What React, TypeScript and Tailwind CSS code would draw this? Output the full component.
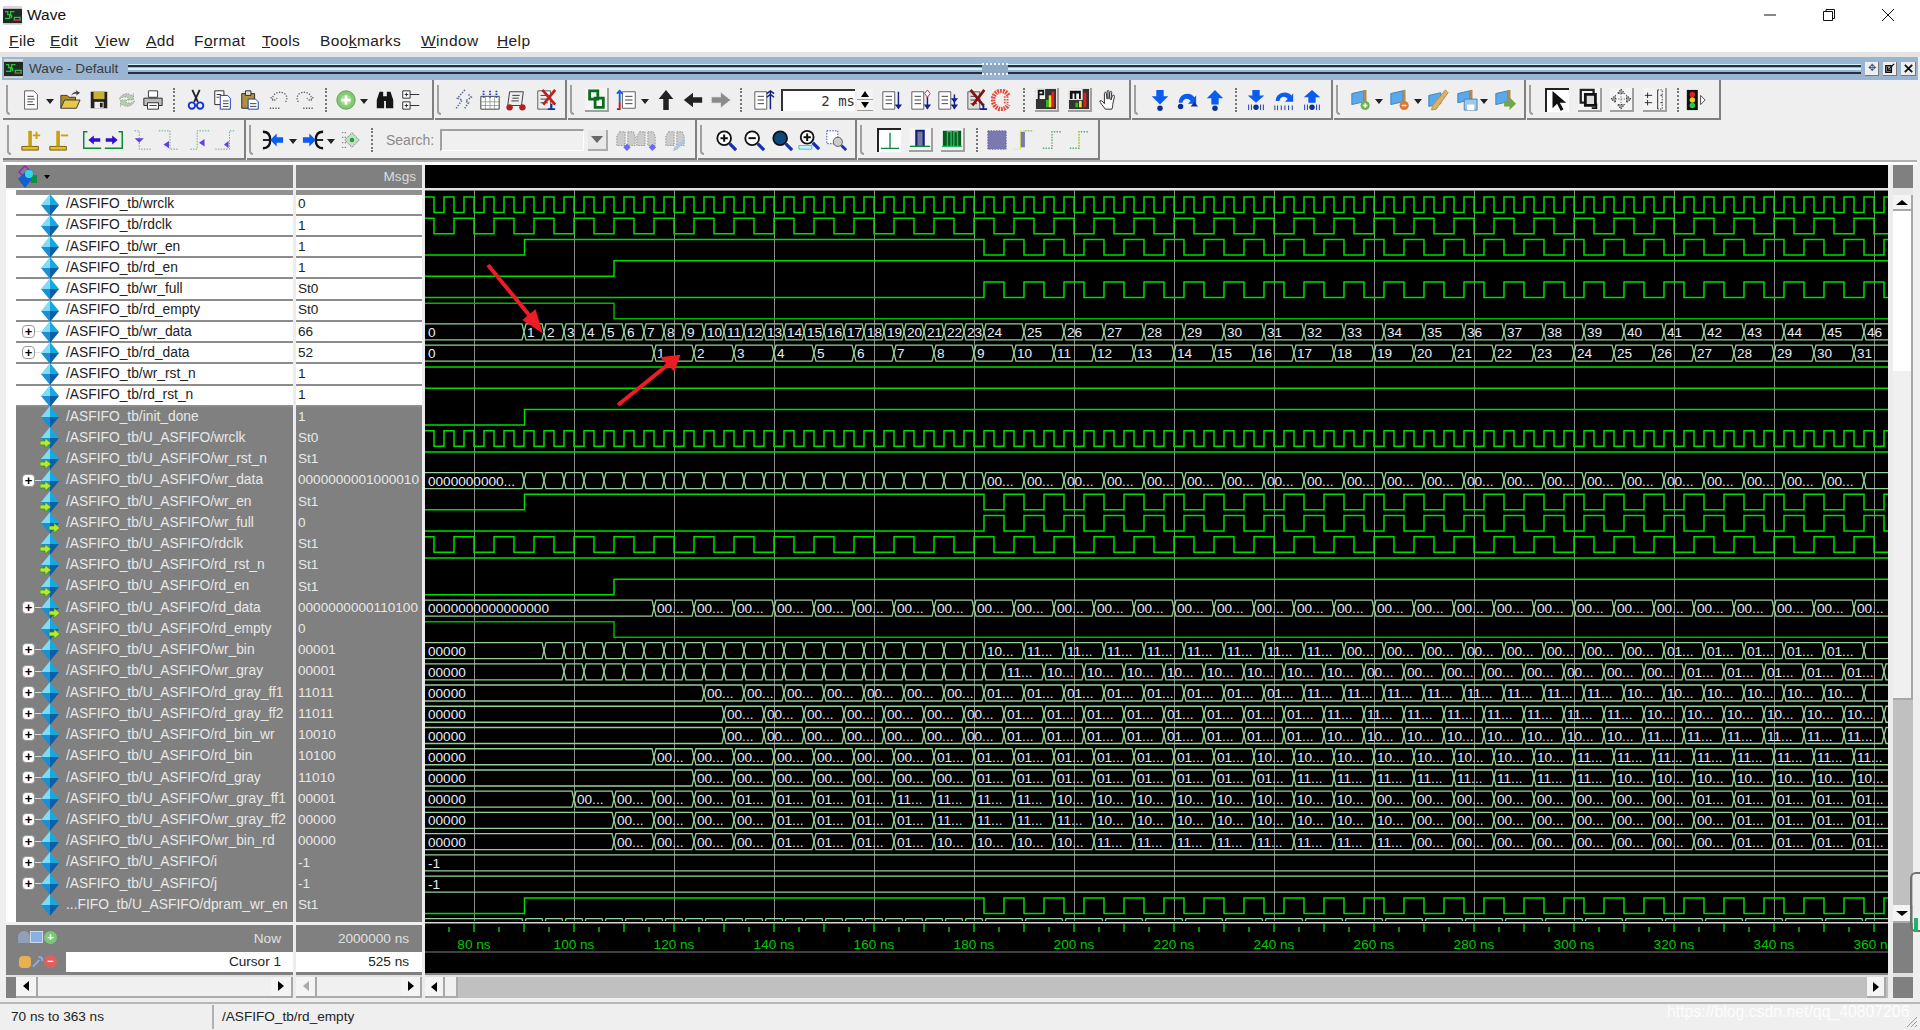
import React from 'react';

const ROW = 21.24;
const WAVE_END = 1900;

// x position of a time is 474 + (ns - 80) * 5
const gridXs = Array.from({ length: 15 }, (_, i) => 474 + i * 100);
const highY = (row: number) => 197 + ROW * row;

const toggles = (start: number, step: number, end = WAVE_END) => {
  const out: number[] = [];
  for (let x = start; x < end; x += step) out.push(x);
  return out;
};

type Seg = { x: number; label: string };
const runs = (start: number, step: number, list: [string, number][]) => {
  const out: Seg[] = [];
  let x = start;
  list.forEach(([label, count]) => {
    for (let i = 0; i < count; i++) {
      out.push({ x, label });
      x += step;
    }
  });
  return out;
};
const numbered = (start: number, step: number, from: number, to: number) => {
  const out: Seg[] = [];
  for (let n = from; n <= to; n++) out.push({ x: start + (n - from) * step, label: String(n) });
  return out;
};

const d = (v: string) => v + '...';
const wrEnEdges = [524.5, ...toggles(984, 20)];
const wrFullEdges = toggles(984, 20);
const rdEnEdges = [614];
const rdclkEdges = [434, ...toggles(454, 20)];

type Sig =
  | { kind: 'bit'; high: boolean; edges: number[]; color?: string }
  | { kind: 'bus'; segs: Seg[] };

const signals: Sig[] = [
  { kind: 'bit', high: true, edges: toggles(434, 10) },
  { kind: 'bit', high: true, edges: rdclkEdges },
  { kind: 'bit', high: false, edges: wrEnEdges },
  { kind: 'bit', high: false, edges: rdEnEdges },
  { kind: 'bit', high: false, edges: wrFullEdges },
  { kind: 'bit', high: true, edges: rdEnEdges, color: '#00b400' },
  { kind: 'bus', segs: [{ x: 425, label: '0' }, ...numbered(524, 20, 1, 23), ...numbered(984, 40, 24, 46)] },
  { kind: 'bus', segs: [{ x: 425, label: '0' }, ...numbered(654, 40, 1, 31)] },
  { kind: 'bit', high: true, edges: [] },
  { kind: 'bit', high: true, edges: [] },
  { kind: 'bit', high: false, edges: [524.5] },
  { kind: 'bit', high: true, edges: toggles(434, 10) },
  { kind: 'bit', high: true, edges: [] },
  { kind: 'bus', segs: [{ x: 425, label: '0000000000...' }, ...runs(524, 20, [['', 23]]), ...runs(984, 40, [[d('00'), 22], ['', 1]])] },
  { kind: 'bit', high: false, edges: wrEnEdges },
  { kind: 'bit', high: false, edges: wrFullEdges },
  { kind: 'bit', high: true, edges: rdclkEdges },
  { kind: 'bit', high: true, edges: [] },
  { kind: 'bit', high: false, edges: rdEnEdges },
  { kind: 'bus', segs: [{ x: 425, label: '0000000000000000' }, ...runs(654, 40, [[d('00'), 31]])] },
  { kind: 'bit', high: true, edges: rdEnEdges, color: '#00b400' },
  { kind: 'bus', segs: [{ x: 425, label: '00000' }, ...runs(544, 20, [['', 22]]), ...runs(984, 40, [[d('10'), 1], [d('11'), 8], [d('00'), 8], [d('01'), 5], ['', 1]])] },
  { kind: 'bus', segs: [{ x: 425, label: '00000' }, ...runs(564, 20, [['', 22]]), ...runs(1004, 40, [[d('11'), 1], [d('10'), 8], [d('00'), 8], [d('01'), 5], ['', 1]])] },
  { kind: 'bus', segs: [{ x: 425, label: '00000' }, ...runs(704, 40, [[d('00'), 7], [d('01'), 8], [d('11'), 8], [d('10'), 6], ['', 1]])] },
  { kind: 'bus', segs: [{ x: 425, label: '00000' }, ...runs(724, 40, [[d('00'), 7], [d('01'), 8], [d('11'), 8], [d('10'), 6], ['', 1]])] },
  { kind: 'bus', segs: [{ x: 425, label: '00000' }, ...runs(724, 40, [[d('00'), 7], [d('01'), 8], [d('10'), 8], [d('11'), 6], ['', 1]])] },
  { kind: 'bus', segs: [{ x: 425, label: '00000' }, ...runs(654, 40, [[d('00'), 7], [d('01'), 8], [d('10'), 8], [d('11'), 8]])] },
  { kind: 'bus', segs: [{ x: 425, label: '00000' }, ...runs(694, 40, [[d('00'), 7], [d('01'), 8], [d('11'), 8], [d('10'), 7]])] },
  { kind: 'bus', segs: [{ x: 425, label: '00000' }, ...runs(574, 40, [[d('00'), 4], [d('01'), 4], [d('11'), 4], [d('10'), 8], [d('00'), 8], [d('01'), 5]])] },
  { kind: 'bus', segs: [{ x: 425, label: '00000' }, ...runs(614, 40, [[d('00'), 4], [d('01'), 4], [d('11'), 4], [d('10'), 8], [d('00'), 8], [d('01'), 4], ['', 1]])] },
  { kind: 'bus', segs: [{ x: 425, label: '00000' }, ...runs(614, 40, [[d('00'), 4], [d('01'), 4], [d('10'), 4], [d('11'), 8], [d('00'), 8], [d('01'), 4], ['', 1]])] },
  { kind: 'bus', segs: [{ x: 425, label: '-1' }] },
  { kind: 'bus', segs: [{ x: 425, label: '-1' }] },
  { kind: 'bit', high: false, edges: wrEnEdges },
  { kind: 'bus', segs: [{ x: 425, label: '' }, ...runs(524, 20, [['', 23]]), ...runs(984, 40, [['', 23]])] },
];

const rows: [string, string, 'plain' | 'in' | 'out', boolean][] = [
  ['/ASFIFO_tb/wrclk', '0', 'plain', false],
  ['/ASFIFO_tb/rdclk', '1', 'plain', false],
  ['/ASFIFO_tb/wr_en', '1', 'plain', false],
  ['/ASFIFO_tb/rd_en', '1', 'plain', false],
  ['/ASFIFO_tb/wr_full', 'St0', 'plain', false],
  ['/ASFIFO_tb/rd_empty', 'St0', 'plain', false],
  ['/ASFIFO_tb/wr_data', '66', 'plain', true],
  ['/ASFIFO_tb/rd_data', '52', 'plain', true],
  ['/ASFIFO_tb/wr_rst_n', '1', 'plain', false],
  ['/ASFIFO_tb/rd_rst_n', '1', 'plain', false],
  ['/ASFIFO_tb/init_done', '1', 'plain', false],
  ['/ASFIFO_tb/U_ASFIFO/wrclk', 'St0', 'in', false],
  ['/ASFIFO_tb/U_ASFIFO/wr_rst_n', 'St1', 'in', false],
  ['/ASFIFO_tb/U_ASFIFO/wr_data', '0000000001000010', 'in', true],
  ['/ASFIFO_tb/U_ASFIFO/wr_en', 'St1', 'in', false],
  ['/ASFIFO_tb/U_ASFIFO/wr_full', '0', 'out', false],
  ['/ASFIFO_tb/U_ASFIFO/rdclk', 'St1', 'in', false],
  ['/ASFIFO_tb/U_ASFIFO/rd_rst_n', 'St1', 'in', false],
  ['/ASFIFO_tb/U_ASFIFO/rd_en', 'St1', 'in', false],
  ['/ASFIFO_tb/U_ASFIFO/rd_data', '0000000000110100', 'out', true],
  ['/ASFIFO_tb/U_ASFIFO/rd_empty', '0', 'out', false],
  ['/ASFIFO_tb/U_ASFIFO/wr_bin', '00001', 'plain', true],
  ['/ASFIFO_tb/U_ASFIFO/wr_gray', '00001', 'plain', true],
  ['/ASFIFO_tb/U_ASFIFO/rd_gray_ff1', '11011', 'plain', true],
  ['/ASFIFO_tb/U_ASFIFO/rd_gray_ff2', '11011', 'plain', true],
  ['/ASFIFO_tb/U_ASFIFO/rd_bin_wr', '10010', 'plain', true],
  ['/ASFIFO_tb/U_ASFIFO/rd_bin', '10100', 'plain', true],
  ['/ASFIFO_tb/U_ASFIFO/rd_gray', '11010', 'plain', true],
  ['/ASFIFO_tb/U_ASFIFO/wr_gray_ff1', '00001', 'plain', true],
  ['/ASFIFO_tb/U_ASFIFO/wr_gray_ff2', '00000', 'plain', true],
  ['/ASFIFO_tb/U_ASFIFO/wr_bin_rd', '00000', 'plain', true],
  ['/ASFIFO_tb/U_ASFIFO/i', '-1', 'plain', true],
  ['/ASFIFO_tb/U_ASFIFO/j', '-1', 'plain', true],
  ['...FIFO_tb/U_ASFIFO/dpram_wr_en', 'St1', 'plain', false],
];

const BLUE = '#0b5cf0';
const dotted = { strokeDasharray: '1.5 1.5' };

// toolbar glyphs, all drawn on a 24 unit box
const glyphs: Record<string, React.ReactNode> = {
  doc: (<><path d="M5 2h10l4 4v16H5z" fill="#fff" stroke="#555" /><path d="M8 8h7M8 11h8M8 14h6M8 17h8" stroke="#333" /></>),
  open: (<><path d="M2 21V7h7l2 2h7v3" fill="#b08a20" stroke="#333" /><path d="M2 21l4-9h17l-4 9z" fill="#e6c84c" stroke="#333" /><path d="M13 7c2-3 4-4 6-4l-1-2 5 3-4 3v-2c-2 0-4 1-6 2z" fill="#444" /></>),
  save: (<><path d="M3 3h18v18H3z" fill="#222" /><path d="M6 3h12v8H6z" fill="#c8b030" /><path d="M7 14h10v7H7z" fill="#eee" /><path d="M13 15h3v5h-3z" fill="#222" /></>),
  reload: (<path d="M4 11c1-5 8-8 13-4l2-2v7h-7l2-2c-3-2-7-2-10 1zM20 13c-1 5-8 8-13 4l-2 2v-7h7l-2 2c3 2 7 2 10-1z" fill="#b8ccb0" stroke="#8a9a88" {...dotted} />),
  print: (<><path d="M7 2h10v7H7z" fill="#fff" stroke="#333" /><path d="M2 10h20v8H2z" fill="#bbb" stroke="#222" /><path d="M6 15h12v7H6z" fill="#fff" stroke="#222" /><path d="M8 18h8" stroke="#333" /></>),
  cut: (<><path d="M8 1l6 13M16 1l-6 13" stroke="#222" strokeWidth="2" /><circle cx="7.5" cy="18" r="3.5" fill="none" stroke="#1030d0" strokeWidth="2" /><circle cx="16.5" cy="18" r="3.5" fill="none" stroke="#1030d0" strokeWidth="2" /></>),
  copy: (<><path d="M3 2h10v15H3z" fill="#fff" stroke="#222" /><path d="M9 7h8l3 3v12H9z" fill="#fff" stroke="#1030a0" /><path d="M5 6h5M5 9h3M12 13h6M12 16h6M12 19h6" stroke="#333" /></>),
  paste: (<><path d="M3 5h14v16H3z" fill="#b09040" stroke="#222" /><path d="M7 2h6v5H7z" fill="#ddd" stroke="#222" /><path d="M10 11h8l3 3v8H10z" fill="#fff" stroke="#1030a0" /><path d="M12 16h7M12 19h7" stroke="#333" /></>),
  undo: (<path d="M2 21h12M5 12c-1-6 6-11 13-7 4 3 3 8 0 10M3 9l3 4 4-3" fill="none" stroke="#666" strokeWidth="1.4" {...dotted} />),
  redo: (<path d="M10 21h12M19 12c1-6-6-11-13-7-4 3-3 8 0 10M21 9l-3 4-4-3" fill="none" stroke="#666" strokeWidth="1.4" {...dotted} />),
  add: (<><circle cx="12" cy="12" r="10" fill="#86c876" stroke="#5a9a55" /><circle cx="12" cy="12" r="6" fill="#a6dc96" /><path d="M12 7v10M7 12h10" stroke="#fff" strokeWidth="3" /></>),
  binoc: (<path d="M3 12l3-9h4v5h4V3h4l3 9v9h-8v-8h-2v8H3z" fill="#151515" />),
  tree: (<><path d="M3 2h8v8H3zM3 14h8v8H3z" fill="#fff" stroke="#222" /><path d="M5 6h4M7 4v4M5 18h4M7 16v4M11 6h10M11 18h10" stroke="#222" /></>),
  squig: (<path d="M14 1l-8 9 5 2-7 10M18 6l3 3-6 4 3 2-4 6" fill="none" stroke="#5a6a90" strokeWidth="1.8" {...dotted} />),
  cal: (<><path d="M2 8h20v14H2z" fill="#fff" stroke="#333" /><path d="M5 2v9M12 2v9M19 2v9" stroke="#2040c0" strokeWidth="2" {...dotted} /><path d="M2 14h20M2 18h20M7 8v14M12 8v14M17 8v14" stroke="#777" strokeWidth=".7" /></>),
  scroll: (<><path d="M5 3h15l-2 15H3z" fill="#eee" stroke="#333" /><path d="M8 7h8M8 10h7M7 13h8" stroke="#333" /><circle cx="5" cy="20" r="3.5" fill="#b02020" /><circle cx="19" cy="20" r="3.5" fill="#b02020" /></>),
  docx: (<><path d="M3 2h14v20H3z" fill="#eee" stroke="#555" /><path d="M6 7h9M6 11h7M6 15h8" stroke="#333" /><path d="M8 1l14 16M22 1L9 17" stroke="#c02020" strokeWidth="3" /><path d="M18 16v6M14 22h8" stroke="#1030a0" strokeWidth="2" /></>),
  chain: (<path d="M5 3h9v9H5zM11 11h9v10h-9z" fill="none" stroke="#0a6a20" strokeWidth="3" />),
  docud: (<><path d="M7 3h14v18H7z" fill="#fff" stroke="#555" /><path d="M10 8h8M10 12h8M10 16h8" stroke="#333" /><path d="M4 2v12M1 5l3-3 3 3" fill="none" stroke={BLUE} strokeWidth="2" /><path d="M4 14v8h-3" fill="none" stroke="#c01010" strokeWidth="2" /></>),
  up: (<path d="M12 1l8 10h-5v12H9V11H4z" fill="#222" />),
  left: (<path d="M2 12l10-8v5h10v6H12v5z" fill="#222" />),
  right: (<path d="M22 12l-10-8v5H2v6h10v5z" fill="#8a8a8a" stroke="#aaa" {...dotted} />),
  bars: (<><path d="M2 3h13v19H2z" fill="#fff" stroke="#555" /><path d="M5 8h7M5 12h7M5 16h7" stroke="#333" /><path d="M19 2v20M15 5l4-3 4 3M15 9l4-3 4 3" fill="none" stroke="#10208c" strokeWidth="1.6" /></>),
  bardn: (<><path d="M2 3h13v19H2z" fill="#fff" stroke="#555" /><path d="M5 8h7M5 12h7M5 16h7" stroke="#333" /><path d="M19 3v18" stroke="#10208c" strokeWidth="1.6" /><path d="M15 17h8l-4 5z" fill="#10208c" /></>),
  barud: (<><path d="M2 3h13v19H2z" fill="#fff" stroke="#555" /><path d="M5 8h7M5 12h7M5 16h7" stroke="#333" /><path d="M19 8v14" stroke="#10208c" strokeWidth="1.6" /><path d="M15 17h8l-4 5z" fill="#10208c" /><path d="M19 1l3 4-3 4-3-4z" fill="#fff" stroke="#d03030" /></>),
  bardd: (<><path d="M2 3h13v19H2z" fill="#fff" stroke="#555" /><path d="M5 8h7M5 12h7M5 16h7" stroke="#333" /><path d="M19 6v16" stroke="#10208c" strokeWidth="1.6" /><path d="M15 10h8l-4 5zM15 17h8l-4 5z" fill="#10208c" /></>),
  barx: (<><path d="M2 3h13v19H2z" fill="#ddd" stroke="#555" /><path d="M5 8h7M5 12h7M5 16h7" stroke="#333" /><path d="M5 1l14 17M20 1L7 18" stroke="#8a1010" strokeWidth="3" /><path d="M19 16v6M15 22h8" stroke="#10208c" strokeWidth="2" /></>),
  redc: (<><path d="M19 7A9 10 0 1 0 19 17" fill="none" stroke="#e05040" strokeWidth="5" {...{ strokeDasharray: '2 1' }} /><path d="M15 8v8M18 8v8" stroke="#e05040" strokeWidth="2" {...dotted} /></>),
  p: (<><path d="M1 1h22v22H1z" fill="#333" /><path d="M1 1h10v11H1z" fill="#f4f4f4" /><path d="M3 2h7v6H5v4H3zM5 4v2h3V4z" fill="#111" fillRule="evenodd" /><path d="M12 13h3v8h-3z" fill="#20c020" /><path d="M15 8h3v13h-3z" fill="#f0e020" /><path d="M18 4h3v17h-3z" fill="#e02020" /></>),
  m: (<><path d="M1 1h22v22H1z" fill="#333" /><path d="M1 1h15v12H1z" fill="#f4f4f4" /><path d="M2 3h12v3H2zM2 3h3v9H2zM7 3h2v9H7zM12 3h2v9h-2z" fill="#111" /><path d="M8 16h3v5H8z" fill="#20c020" /><path d="M12 14h3v7h-3z" fill="#f0e020" /><path d="M17 5h3v16h-3z" fill="#e02020" /></>),
  hand: (<path d="M8 22c-2-3-6-7-6-9 1-1 3 0 5 3V5c0-2 2-2 2 0l1 6V3c0-2 2-2 2 0v8l1-7c0-2 2-2 2 0l-1 8 2-5c1-1 2 0 2 1l-2 9c0 2 0 3-1 5z" fill="#fff" stroke="#222" />),
  stepin: (<><path d="M8 1h8v7h5l-9 9-9-9h5z" fill={BLUE} /><circle cx="12" cy="21" r="3" fill="#103090" /></>),
  stepov: (<><path d="M3 15C3 5 15 2 20 9l2-2v9h-9l3-3C13 9 8 10 7 15z" fill={BLUE} /><circle cx="5" cy="19" r="3" fill="#103090" /><path d="M20 14l-4 5h8z" fill="#103090" /></>),
  stepout: (<><path d="M12 1l9 9h-5v7H8v-7H3z" fill={BLUE} /><circle cx="12" cy="21" r="3" fill="#103090" /></>),
  runin: (<><path d="M8 1h8v6h5l-9 8-9-8h5z" fill={BLUE} /><path d="M4 17v6M7 17v6M17 17v6M20 17v6" stroke="#103090" /><circle cx="12" cy="20" r="3" fill="#103090" /></>),
  runov: (<><path d="M3 13C3 4 15 1 20 7l2-2v9h-9l3-3C13 7 8 8 7 13z" fill={BLUE} /><path d="M2 18v5M5 18v5M9 18v5M13 18v5M17 18v5M21 18v5" stroke="#103090" /></>),
  runout: (<><path d="M12 1l9 8h-5v6H8V9H3z" fill={BLUE} /><path d="M4 17v6M7 17v6M17 17v6M20 17v6" stroke="#103090" /><circle cx="12" cy="20" r="3" fill="#103090" /></>),
  flagp: (<><path d="M2 5l13-3v12L2 17z" fill="#5aaaea" stroke="#3a80c0" /><path d="M15 1h3v15h-3z" fill="#b08a50" /><circle cx="16.5" cy="18" r="5" fill="#70b050" /><path d="M16.5 15.5v5M14 18h5" stroke="#fff" strokeWidth="1.5" /></>),
  flagm: (<><path d="M2 5l13-3v12L2 17z" fill="#5aaaea" stroke="#3a80c0" /><path d="M15 1h3v15h-3z" fill="#b08a50" /><circle cx="16.5" cy="18" r="5" fill="#e07830" /><path d="M14 18h5" stroke="#fff" strokeWidth="1.5" /></>),
  flage: (<><path d="M2 7l13-3v12L2 19z" fill="#5aaaea" stroke="#3a80c0" /><path d="M20 1l3 3-13 18-5 1 1-5z" fill="#e0b060" stroke="#b08a50" /></>),
  flags: (<><path d="M2 5l13-3v10L2 15z" fill="#5aaaea" stroke="#3a80c0" /><path d="M15 1h3v12h-3z" fill="#b08a50" /><path d="M9 11h14v12H9z" fill="#9cc8ee" stroke="#4a80b0" /><path d="M12 17h8v6h-8z" fill="#fff" /></>),
  flagg: (<><path d="M2 5l13-3v12L2 17z" fill="#5aaaea" stroke="#3a80c0" /><path d="M15 1h3v12h-3z" fill="#b08a50" /><path d="M11 13h6v-4l7 7-7 7v-4h-6z" fill="#70a848" /></>),
  arrow: (<path d="M6 1v19l5-5 4 8 3-2-4-7h7z" fill="#111" />),
  zoomr: (<><path d="M3 2h14v14H3z" fill="none" stroke="#222" strokeWidth="2.5" /><path d="M8 7h11v12H8z" fill="#ddd" stroke="#111" strokeWidth="3" /><path d="M20 17v5h-5" fill="none" stroke="#111" strokeWidth="2" /></>),
  move: (<><path d="M12 1l4 5h-8zM12 23l4-5H8zM1 12l5-4v8zM23 12l-5-4v8z" fill="#999" stroke="#333" {...dotted} /><path d="M12 6v12M6 12h12" stroke="#777" {...dotted} /></>),
  split: (<><path d="M16 2h5v21h-5" fill="none" stroke="#333" {...dotted} /><path d="M2 8h8M2 16h8M16 2v21" stroke="#222" /><path d="M5 5v6M5 13v6M19 8h2M19 16h2" stroke="#222" /></>),
  light: (<><path d="M2 1h12v22H2z" fill="#111" /><circle cx="8" cy="6" r="3" fill="#e02020" /><circle cx="8" cy="12" r="3" fill="#e0d020" /><circle cx="8" cy="18" r="3" fill="#20d040" /><path d="M17 7l5 5-5 5z" fill="#fff" stroke="#444" /></>),
  ycursp: (<><path d="M2 19h18v4H2z" fill="#e8c020" stroke="#6a5a10" /><path d="M11 2v17" stroke="#c8a010" strokeWidth="4" /><path d="M14 7h8M18 3v8" stroke="#c8a010" strokeWidth="2" /></>),
  ycursm: (<><path d="M2 19h18v4H2z" fill="#e8c020" stroke="#6a5a10" /><path d="M11 2v17" stroke="#c8a010" strokeWidth="4" /><path d="M14 7h8" stroke="#c8a010" strokeWidth="2" /></>),
  brl: (<><path d="M7 3H3v18h19" fill="none" stroke="#0a8a30" strokeWidth="1.6" /><path d="M8 12l6-5v3h7v4h-7v3z" fill="#3010d0" /></>),
  brr: (<><path d="M17 3h4v18H2" fill="none" stroke="#0a8a30" strokeWidth="1.6" /><path d="M16 12l-6-5v3H3v4h7v3z" fill="#3010d0" /></>),
  dg1: (<><path d="M4 2h5v20h14" fill="none" stroke="#50a870" {...dotted} /><path d="M4 10l5 5 5-5z" fill="#6040e0" /></>),
  dg2: (<><path d="M1 2h12v20h10" fill="none" stroke="#50a870" {...dotted} /><path d="M6 17l6-4v8z" fill="#6040e0" /></>),
  dg3: (<><path d="M23 2H10v20H2" fill="none" stroke="#50a870" {...dotted} /><path d="M12 15l6-4v8z" fill="#6040e0" /></>),
  dg4: (<><path d="M23 2h-5v20H2" fill="none" stroke="#50a870" {...dotted} /><path d="M12 17l5 4V13z" fill="#6040e0" /></>),
  cmbl: (<><path d="M1 3c6 0 8 4 8 9s-2 9-8 9" fill="none" stroke="#111" strokeWidth="2.5" /><path d="M9 12l7-7v4h7v6h-7v4z" fill={BLUE} /><path d="M1 12h7" stroke="#111" strokeWidth="2" /></>),
  cmbr: (<><path d="M23 3c-6 0-8 4-8 9s2 9 8 9" fill="none" stroke="#111" strokeWidth="2.5" /><path d="M15 12L8 5v4H1v6h7v4z" fill={BLUE} /><path d="M16 12h7" stroke="#111" strokeWidth="2" /></>),
  cmbg: (<><path d="M12 4l8 8-8 8-8-8z" fill="#c0e0c0" stroke="#555" {...dotted} /><path d="M1 4h5M1 9h5M1 15h5M1 20h5" stroke="#666" {...dotted} /><circle cx="12" cy="12" r="2.5" fill="#20a040" /></>),
  srch1: (<><path d="M5 3h6v15H2V8zM14 3h6l2 5v10h-8z" fill="#ccc" stroke="#8a8a8a" {...dotted} /><path d="M9 20l4-4 4 4-4 4z" fill="#6a6af0" /></>),
  srch2: (<><path d="M5 3h6v15H2V8zM14 3h6l2 5v10h-8z" fill="#ccc" stroke="#8a8a8a" {...dotted} /><path d="M15 20l4-4 4 4-4 4z" fill="#6a6af0" /></>),
  srch3: (<><path d="M5 3h6v15H2V8zM14 3h6l2 5v10h-8z" fill="#ccc" stroke="#8a8a8a" {...dotted} /><path d="M21 12l2 2-9 9-4 1 1-4z" fill="#a8c8e8" /></>),
  zin: (<><circle cx="10" cy="10" r="7.5" fill="#fff" stroke="#111" strokeWidth="2" /><path d="M10 6v8M6 10h8" stroke="#111" strokeWidth="2.2" /><path d="M16 16l7 7" stroke="#1030b0" strokeWidth="3.5" /></>),
  zout: (<><circle cx="10" cy="10" r="7.5" fill="#fff" stroke="#111" strokeWidth="2" /><path d="M6 10h8" stroke="#111" strokeWidth="2.2" /><path d="M16 16l7 7" stroke="#1030b0" strokeWidth="3.5" /></>),
  zfull: (<><circle cx="10" cy="10" r="7.5" fill="#0a4a80" stroke="#111" strokeWidth="2" /><path d="M16 16l7 7" stroke="#1030b0" strokeWidth="3.5" /></>),
  zcur: (<><circle cx="10" cy="9" r="7" fill="#fff" stroke="#111" strokeWidth="2" /><path d="M10 5v8M6 9h8" stroke="#111" strokeWidth="2.2" /><path d="M1 18h14v4H1z" fill="#c8f0ff" stroke="#40c0e0" /><path d="M16 15l7 7" stroke="#1030b0" strokeWidth="3.5" /></>),
  zdash: (<><path d="M2 2h12v14H2z" fill="#fff" stroke="#2030b0" {...dotted} /><circle cx="14" cy="14" r="5" fill="#ccc" stroke="#555" /><path d="M18 18l5 5" stroke="#1030b0" strokeWidth="3" /></>),
  wv1: (<path d="M12 3v17M2 20h20" stroke="#0a8a40" strokeWidth="1.5" fill="none" />),
  wv2: (<><path d="M8 3h8v17H8z" fill="#7a7aa0" /><path d="M8 20V3h8v17" stroke="#102080" fill="none" strokeWidth="2.4" /><path d="M1 20h22" stroke="#0a8a40" fill="none" strokeWidth="1.5" /></>),
  wv3: (<><path d="M2 3h20v17H2z" fill="#0a5a20" /><path d="M7 20V4h4v16M14 20V4h4v16M1 20h22" stroke="#20c060" fill="none" strokeWidth="1.5" /></>),
  wv4: (<path d="M2 2h20v20H2z" fill="#7a7ab0" stroke="#5a5a90" {...dotted} />),
  wv5: (<><path d="M8 3h5v17H8z" fill="#7a7ab0" /><path d="M1 22h7V2h14M8 22V2" fill="none" stroke="#e0e040" {...dotted} /><path d="M13 2h9" stroke="#50a870" {...dotted} /></>),
  wv6: (<path d="M2 21h10V3h10" fill="none" stroke="#50a870" strokeWidth="1.4" {...dotted} />),
  wv7: (<><path d="M2 21h10V3h10" fill="none" stroke="#50a870" strokeWidth="1.4" {...dotted} /><path d="M12 3v18" stroke="#e0e040" strokeWidth="1.4" {...dotted} /></>),
};

const Glyph = ({ name }: { name: string }) => (
  <svg viewBox="0 0 24 24" className="w-[22px] h-[22px]">{glyphs[name]}</svg>
);

type Item = [string, number];
const W: Record<string, number> = { grip: 4, drop: 8, sep: 2, time: 74, spin: 16, searchlabel: 50, searchbox: 144, searchdrop: 20 };

const ToolItem = ({ name, left }: { name: string; left: number }) => {
  if (name === 'grip') return <div style={{ marginLeft: left }} className="w-[4px] h-[30px] border-l-2 border-b-2 border-[#a0a0a0] rounded-bl-sm" />;
  if (name === 'sep') return <div style={{ marginLeft: left }} className="w-[2px] h-[24px] border-l-2 border-dotted border-[#777]" />;
  if (name === 'drop') return <div style={{ marginLeft: left }} className="w-0 h-0 border-x-4 border-x-transparent border-t-[5px] border-t-[#222] mt-[2px]" />;
  if (name === 'time')
    return (
      <div style={{ marginLeft: left }} className="w-[74px] h-[22px] bg-white border-l-2 border-t-2 border-[#333] text-right text-[14px] leading-[20px] text-[#333] font-['DejaVu_Sans_Mono',monospace]">
        2 ms
      </div>
    );
  if (name === 'spin')
    return (
      <div style={{ marginLeft: left }} className="w-[16px] h-[22px] flex flex-col">
        <div className="h-[11px] flex items-center justify-center bg-[#f4f4f4] border-b border-[#999]"><div className="w-0 h-0 border-x-4 border-x-transparent border-b-[6px] border-b-black" /></div>
        <div className="h-[11px] flex items-center justify-center bg-[#f4f4f4] border-b border-[#999]"><div className="w-0 h-0 border-x-4 border-x-transparent border-t-[6px] border-t-black" /></div>
      </div>
    );
  if (name === 'searchlabel') return <div style={{ marginLeft: left }} className="w-[50px] text-[14px] text-[#8a8a8a]">Search:</div>;
  if (name === 'searchbox') return <div style={{ marginLeft: left }} className="w-[144px] h-[22px] bg-[#f0f0f0] border-l-2 border-t-2 border-[#a0a0a0] border-r border-b border-r-white border-b-white" />;
  if (name === 'searchdrop')
    return (
      <div style={{ marginLeft: left }} className="w-[20px] h-[21px] flex items-center justify-center bg-[#e8e8e8] border-r-2 border-b-2 border-[#aaa]">
        <div className="w-0 h-0 border-x-[6px] border-x-transparent border-t-[7px] border-t-[#666]" />
      </div>
    );
  const raised = name === 'chain' || name === 'p' || name === 'm' || name === 'wv2' || name === 'wv3' || name === 'zoomr' || name === 'move' || name === 'split';
  const pressed = name === 'arrow' || name === 'wv1';
  return (
    <div
      style={{ marginLeft: left }}
      className={`w-[24px] h-[24px] flex items-center justify-center ${raised ? 'bg-[#f4f4f4] border-r-2 border-b-2 border-[#a0a0a0]' : ''} ${pressed ? 'bg-white border-l-2 border-t-2 border-[#222]' : ''}`}
    >
      <Glyph name={name} />
    </div>
  );
};

const Section = ({ x0, widthClass, items }: { x0: number; widthClass: string; items: Item[] }) => {
  let cursor = x0;
  return (
    <div className={`${widthClass} h-[40px] pt-[2px] flex items-center shrink-0 border-r-2 border-b-2 border-[#808080]`}>
      {items.map(([name, cx], i) => {
        const w = W[name] ?? 24;
        const left = cx - w / 2 - cursor;
        cursor = cx + w / 2;
        return <ToolItem key={i} name={name} left={left} />;
      })}
    </div>
  );
};

const DiamondShape = ({ arrow }: { arrow: 'plain' | 'in' | 'out' }) => (
  <svg viewBox="0 0 20 22" className="w-[20px] h-[22px]">
    <path d="M10 0L10 11 1 11z" fill="#7fdcf8" />
    <path d="M10 0L19 11 10 11z" fill="#18a8e0" />
    <path d="M1 11L10 11 10 22z" fill="#1a90d4" />
    <path d="M19 11L10 11 10 22z" fill="#0b5fa8" />
    {arrow === 'in' && <path d="M0 14h5v-3l6 5-6 5v-3H0z" fill="#b8e830" stroke="#3a8a20" strokeWidth=".7" />}
    {arrow === 'out' && <path d="M9 14h5v-3l6 5-6 5v-3H9z" fill="#b8e830" stroke="#3a8a20" strokeWidth=".7" />}
  </svg>
);

const NameRow = ({ index }: { index: number }) => {
  const [name, , arrow, expand] = rows[index];
  const white = index < 10;
  return (
    <div className="h-[21.24px] flex shrink-0">
      <div className="w-[10px] bg-white" />
      <div className={`relative flex-1 flex items-center border-b-2 box-border ${white ? 'bg-white border-[#8c8c8c] text-[#222]' : 'bg-[#808080] border-[#808080] text-[#e8e8e8]'}`}>
        {expand && (
          <>
            <div className="absolute left-[6px] top-[3px] w-[13px] h-[13px] flex items-center justify-center bg-white border border-[#999] rounded-sm text-[13px] leading-none text-black font-bold">+</div>
            <div className="absolute left-[19px] top-[9px] w-[6px] h-[1px] bg-[#ddd]" />
          </>
        )}
        <div className="absolute left-[24px] -top-[1px]">
          <DiamondShape arrow={arrow} />
        </div>
        <span className="ml-[50px] whitespace-nowrap text-[13.8px]">{name}</span>
      </div>
    </div>
  );
};

const ValueRow = ({ index }: { index: number }) => {
  const white = index < 10;
  return (
    <div className={`h-[21.24px] shrink-0 flex items-center pl-[2px] border-b-2 box-border whitespace-nowrap ${white ? 'bg-white border-[#8c8c8c] text-[#222]' : 'bg-[#808080] border-[#808080] text-[#e8e8e8]'}`}>
      {rows[index][1]}
    </div>
  );
};

const bitPath = (row: number, high: boolean, edges: number[]) => {
  const hi = highY(row);
  const lo = hi + 15.5;
  let level = high;
  let p = `M425 ${level ? hi : lo}`;
  edges.forEach((x) => {
    p += `H${x}V${level ? lo : hi}`;
    level = !level;
  });
  return p + `H${WAVE_END}`;
};

const busSegPath = (row: number, x0: number, x1: number, first: boolean) => {
  const top = highY(row) - 0.5;
  const bot = top + 16;
  const mid = (top + bot) / 2;
  const a = first ? x0 : x0 + 2;
  const start = first ? `M${x0} ${top}` : `M${x0} ${mid}L${a} ${top}`;
  const body = `${start}H${x1 - 2}L${x1} ${mid}L${x1 - 2} ${bot}H${a}`;
  return first ? body : `${body}L${x0} ${mid}`;
};

const WaveChart = () => (
  <svg viewBox="425 165 1463 808" className="w-[1463px] h-[808px] block bg-black font-['Liberation_Sans',sans-serif]">
    <rect x="425" y="188" width="1463" height="2.5" fill="#e0e0e0" />
    {gridXs.map((x) => (
      <line key={x} x1={x + 0.5} x2={x + 0.5} y1={190} y2={923} stroke="#8c8c8c" strokeWidth="1" />
    ))}
    {signals.map((s, i) => {
      if (s.kind === 'bit') {
        return <path key={i} d={bitPath(i, s.high, s.edges)} fill="none" stroke={s.color ?? '#00dc00'} strokeWidth="1.5" />;
      }
      return (
        <g key={i}>
          {s.segs.map((seg, j) => {
            const next = s.segs[j + 1] ? s.segs[j + 1].x : WAVE_END;
            return (
              <g key={j}>
                <path d={busSegPath(i, seg.x, next, j === 0)} fill="none" stroke="#96d096" strokeWidth="1.3" />
                {seg.label && (
                  <text x={seg.x + 3} y={highY(i) + 12.5} fontSize="13.6" fill="#e4ecfa">
                    {seg.label}
                  </text>
                )}
              </g>
            );
          })}
        </g>
      );
    })}
    {/* the next signal is cut off by the cursor pane */}
    <rect x="425" y="921" width="1463" height="52" fill="#000" />
    <rect x="425" y="922" width="1463" height="1.5" fill="#d8d8d8" />
    {toggles(449, 25, 1888).map((x, i) => (
      <line key={x} x1={x} x2={x} y1={i % 2 === 0 ? 927 : 924} y2={932} stroke="#00c800" strokeWidth="1.5" />
    ))}
    {gridXs.map((x, i) => (
      <text key={x} x={x} y={949} fontSize="13.6" fill="#00c800" textAnchor="middle">
        {80 + i * 20} ns
      </text>
    ))}
    <line x1="425" x2="1888" y1="952" y2="952" stroke="#555" strokeWidth="1.5" />
    {/* red annotation arrows */}
    <path d="M488 265L534 321" stroke="#ee1c25" strokeWidth="4" fill="none" />
    <path d="M541 331L524 320 535 311z" fill="#ee1c25" stroke="#ee1c25" strokeWidth="2" />
    <path d="M618 405L670 363" stroke="#ee1c25" strokeWidth="4" fill="none" />
    <path d="M679 356L674 370 662 358z" fill="#ee1c25" stroke="#ee1c25" strokeWidth="2" />
  </svg>
);

const triClass = {
  left: 'border-y-[5px] border-y-transparent border-r-[6px] border-r-black',
  right: 'border-y-[5px] border-y-transparent border-l-[6px] border-l-black',
  up: 'border-x-[6px] border-x-transparent border-b-[5px] border-b-black',
  down: 'border-x-[6px] border-x-transparent border-t-[5px] border-t-black',
  leftMuted: 'border-y-[5px] border-y-transparent border-r-[6px] border-r-[#aaa]',
};

const ArrowBtn = ({ dir, className }: { dir: keyof typeof triClass; className: string }) => (
  <div className={`${className} flex items-center justify-center bg-[#f4f4f4] border-r-2 border-b-2 border-[#a8a8a8] shrink-0`}>
    <div className={`w-0 h-0 ${triClass[dir]}`} />
  </div>
);

const menu: [React.ReactNode, string][] = [
  [<><u>F</u>ile</>, 'w-[41px]'],
  [<><u>E</u>dit</>, 'w-[45px]'],
  [<><u>V</u>iew</>, 'w-[51px]'],
  [<><u>A</u>dd</>, 'w-[48px]'],
  [<>F<u>o</u>rmat</>, 'w-[68px]'],
  [<><u>T</u>ools</>, 'w-[58px]'],
  [<>Boo<u>k</u>marks</>, 'w-[101px]'],
  [<><u>W</u>indow</>, 'w-[76px]'],
  [<><u>H</u>elp</>, 'w-[50px]'],
];

const WinIcon = () => (
  <svg viewBox="0 0 20 20" className="w-[19px] h-[19px]">
    <rect width="20" height="20" fill="#d8d8d8" />
    <rect y="3" width="20" height="15" fill="#1c2c24" />
    <path d="M2 6h3v3h3V6h4M2 13h5v-3h2v3M12 12h6v3h-6z" stroke="#30c040" fill="none" strokeWidth="1.4" />
    <path d="M11 15h7" stroke="#d02050" strokeWidth="1.5" />
  </svg>
);

export default function App() {
  return (
    <div className="relative w-[1920px] h-[1030px] overflow-hidden bg-[#efefef] font-['Liberation_Sans',sans-serif] text-[13.6px] leading-none">
      {/* window title */}
      <div className="h-[30px] bg-white flex items-center pl-[3px]">
        <WinIcon />
        <span className="ml-[5px] text-[15.5px] text-[#111]">Wave</span>
        <div className="ml-auto flex items-center">
          <svg viewBox="0 0 14 14" className="w-[14px] h-[14px]"><path d="M1 7h12" stroke="#111" /></svg>
          <svg viewBox="0 0 14 14" className="w-[14px] h-[14px] ml-[45px]"><path d="M1.5 3.5h9v9h-9zM4 3.5V1.5h8.5v9h-2" fill="none" stroke="#111" /></svg>
          <svg viewBox="0 0 14 14" className="w-[14px] h-[14px] ml-[45px] mr-[25px]"><path d="M1 1l12 12M13 1L1 13" stroke="#111" /></svg>
        </div>
      </div>
      {/* menu */}
      <div className="h-[22px] bg-white flex items-center pl-[9px] text-[15.5px] text-[#222] tracking-[0.4px]">
        {menu.map(([label, w], i) => (
          <div key={i} className={w}>{label}</div>
        ))}
      </div>
      <div className="h-[5px] bg-[#e4e4e4]" />
      {/* sub window title */}
      <div className="h-[23px] mx-[2px] bg-[#9ab5d2] flex items-center pl-[2px]">
        <WinIcon />
        <span className="ml-[6px] w-[99px] text-[13.6px] text-[#3a3a3a]">Wave - Default</span>
        <div className="relative w-[1733px] h-[10px] flex flex-col">
          <div className="h-[1px] bg-[#d4f0fa]" />
          <div className="h-[2px] bg-[#24303c]" />
          <div className="h-[1px] bg-[#9ab5d2]" />
          <div className="h-[2px] bg-[#d4f0fa]" />
          <div className="h-[2px] bg-[#9ab5d2]" />
          <div className="h-[2px] bg-[#24303c]" />
          <div className="absolute left-[854px] -top-[1px] w-[26px] h-[12px] bg-[#8ea8c4] border-y-2 border-dotted border-[#e8f4fa]" />
        </div>
        <div className="ml-[4px] flex gap-[4px]">
          <div className="w-[14px] h-[14px] bg-[#eee] border-r border-b border-[#777] flex items-center justify-center text-[10px] text-[#555]">✥</div>
          <div className="w-[14px] h-[14px] bg-[#eee] border-r border-b border-[#777] flex items-center justify-center"><svg viewBox="0 0 12 12" className="w-[11px] h-[11px]"><path d="M2 3h6v7H2z" fill="none" stroke="#111" strokeWidth="1.6" /><path d="M11 1L5 7M4 4v4h4" stroke="#111" fill="none" strokeWidth="1.4" /></svg></div>
          <div className="w-[15px] h-[14px] bg-[#eee] border-r border-b border-[#777] flex items-center justify-center"><svg viewBox="0 0 12 12" className="w-[11px] h-[11px]"><path d="M2 2l8 8M10 2L2 10" stroke="#111" strokeWidth="2" /></svg></div>
        </div>
      </div>

      {/* toolbars */}
      <div className="h-[40px] pl-[3px] flex gap-[1px]">
        <Section x0={3} widthClass="w-[431px]" items={[['grip', 8], ['doc', 31], ['drop', 50], ['open', 70], ['save', 99], ['reload', 127], ['print', 153], ['sep', 174], ['cut', 196], ['copy', 223], ['paste', 250], ['undo', 279], ['redo', 305], ['sep', 326], ['add', 346], ['drop', 364], ['binoc', 385], ['tree', 411]]} />
        <Section x0={435} widthClass="w-[132px]" items={[['grip', 439], ['squig', 463], ['cal', 490], ['scroll', 516], ['docx', 546]]} />
        <Section x0={568} widthClass="w-[563px]" items={[['grip', 572], ['chain', 597], ['docud', 627], ['drop', 645], ['up', 666], ['left', 693], ['right', 721], ['sep', 741], ['bars', 764], ['time', 818], ['spin', 865], ['bardn', 892], ['barud', 921], ['bardd', 948], ['barx', 977], ['redc', 1002], ['sep', 1024], ['p', 1047], ['m', 1080], ['hand', 1109]]} />
        <Section x0={1132} widthClass="w-[201px]" items={[['grip', 1136], ['stepin', 1160], ['stepov', 1187], ['stepout', 1215], ['sep', 1236], ['runin', 1256], ['runov', 1284], ['runout', 1312]]} />
        <Section x0={1334} widthClass="w-[192px]" items={[['grip', 1338], ['flagp', 1361], ['drop', 1379], ['flagm', 1400], ['drop', 1418], ['flage', 1438], ['flags', 1467], ['drop', 1484], ['flagg', 1505]]} />
        <Section x0={1527} widthClass="w-[194px]" items={[['grip', 1531], ['arrow', 1557], ['zoomr', 1590], ['move', 1622], ['split', 1655], ['sep', 1678], ['light', 1696]]} />
      </div>
      <div className="h-[40px] pl-[3px] flex gap-[1px]">
        <Section x0={3} widthClass="w-[243px]" items={[['grip', 9], ['ycursp', 31], ['ycursm', 59], ['brl', 92], ['brr', 114], ['dg1', 142], ['dg2', 169], ['dg3', 199], ['dg4', 224]]} />
        <Section x0={247} widthClass="w-[450px]" items={[['grip', 251], ['cmbl', 273], ['drop', 293], ['cmbr', 313], ['drop', 331], ['cmbg', 352], ['sep', 372], ['searchlabel', 411], ['searchbox', 512], ['searchdrop', 598], ['srch1', 626], ['srch2', 646], ['srch3', 675]]} />
        <Section x0={698} widthClass="w-[159px]" items={[['grip', 702], ['zin', 726], ['zout', 754], ['zfull', 782], ['zcur', 809], ['zdash', 836]]} />
        <Section x0={858} widthClass="w-[242px]" items={[['grip', 862], ['wv1', 889], ['wv2', 921], ['wv3', 953], ['sep', 977], ['wv4', 997], ['wv5', 1024], ['wv6', 1052], ['wv7', 1079]]} />
      </div>
      <div className="h-[5px] mx-[3px] bg-white border-t-2 border-[#b0b0b0]" />

      {/* wave window panes */}
      <div className="flex pl-[6px]">
        {/* names */}
        <div className="w-[287px] flex flex-col">
          <div className="h-[23px] bg-[#808080] flex items-center pl-[11px]">
            <svg viewBox="0 0 22 24" className="w-[22px] h-[24px]">
              <path d="M8 1l6 6-6 6-6-6z" fill="none" stroke="#a020c0" strokeWidth="1.5" />
              <path d="M14 10h6v8h-6z" fill="#109040" />
              <path d="M8 7l7 7-7 9-7-9z" fill="#1060d0" />
              <circle cx="12" cy="9" r="4" fill="#30d8e8" />
            </svg>
            <div className="ml-[5px] w-0 h-0 border-x-[3px] border-x-transparent border-t-[4px] border-t-black" />
          </div>
          <div className="h-[2px] bg-[#f4f4f4]" />
          <div className="h-[4.5px] flex">
            <div className="w-[10px] bg-white" />
            <div className="flex-1 bg-[#909090]" />
          </div>
          {rows.map((_, i) => (
            <NameRow key={i} index={i} />
          ))}
          <div className="h-[5.5px] flex">
            <div className="w-[10px] bg-white" />
            <div className="flex-1 bg-[#808080]" />
          </div>
          <div className="h-[3px] bg-[#f0f0f0]" />
          <div className="h-[27px] bg-[#808080] flex items-center justify-end pr-[12px] text-[#e0e0e0] relative">
            Now
            <div className="absolute left-[12px] top-[6px] flex items-center">
              <div className="w-[12px] h-[12px] rounded-t-full bg-[#8fa0b8]" />
              <div className="w-[13px] h-[12px] bg-[#8ab0e8] border border-[#d0d8e8]" />
              <div className="w-[13px] h-[13px] ml-[1px] rounded-full bg-[#7ac878] flex items-center justify-center text-white text-[11px] font-bold">+</div>
            </div>
          </div>
          <div className="h-[20px] bg-[#808080] flex">
            <div className="w-[60px] flex items-center pl-[13px]">
              <div className="w-[12px] h-[12px] bg-[#e8b050] rounded-sm" />
              <div className="w-[11px] h-[12px] ml-[1px] flex items-center justify-center">
                <svg viewBox="0 0 12 12" className="w-[12px] h-[12px]"><path d="M1 11L8 4M7 1a3 3 0 0 1 4 4" stroke="#8ab0e8" strokeWidth="2" fill="none" /></svg>
              </div>
              <div className="w-[13px] h-[13px] ml-[1px] rounded-full bg-[#e06060] flex items-center justify-center text-white text-[11px] font-bold">−</div>
            </div>
            <div className="flex-1 bg-white flex items-center justify-end pr-[12px] text-[#222]">Cursor 1</div>
          </div>
          <div className="h-[5px] border-b-2 border-[#e0e0e0] bg-[#808080]" />
          <div className="h-[21px] pl-[10px] flex bg-[#808080]">
            <ArrowBtn dir="left" className="w-[22px] h-[21px]" />
            <div className="flex-1 bg-[#f0f0f0] border-b-2 border-[#aaa]" />
            <ArrowBtn dir="right" className="w-[22px] h-[21px]" />
          </div>
        </div>
        <div className="w-[3px] bg-[#ececec]" />
        {/* values */}
        <div className="w-[126px] flex flex-col">
          <div className="h-[23px] bg-[#808080] flex items-center justify-end pr-[6px] text-[#dcdcdc]">Msgs</div>
          <div className="h-[2px] bg-[#f4f4f4]" />
          <div className="h-[4.5px] bg-[#909090]" />
          {rows.map((_, i) => (
            <ValueRow key={i} index={i} />
          ))}
          <div className="h-[5.5px] bg-[#808080]" />
          <div className="h-[3px] bg-[#f0f0f0]" />
          <div className="h-[27px] bg-[#808080] flex items-center justify-end pr-[13px] text-[#e0e0e0]">2000000 ns</div>
          <div className="h-[20px] bg-white flex items-center justify-end pr-[13px] text-[#222]">525 ns</div>
          <div className="h-[5px] border-b-2 border-[#e0e0e0] bg-[#808080]" />
          <div className="h-[21px] flex bg-[#808080]">
            <ArrowBtn dir="leftMuted" className="w-[21px] h-[21px]" />
            <div className="flex-1 bg-[#f0f0f0] border-b-2 border-[#aaa]" />
            <ArrowBtn dir="right" className="w-[21px] h-[21px]" />
          </div>
        </div>
        <div className="w-[3px] bg-[#ececec]" />
        {/* waves */}
        <div className="w-[1463px] flex flex-col">
          <WaveChart />
          <div className="h-[4px] bg-[#808080] border-b-2 border-[#e0e0e0]" />
          <div className="h-[21px] flex bg-[#c0c0c0]">
            <ArrowBtn dir="left" className="w-[20px] h-[21px]" />
            <div className="w-[13px] bg-[#f0f0f0] border-r-2 border-b-2 border-[#aaa] shrink-0" />
            <div className="flex-1" />
            <ArrowBtn dir="right" className="w-[19px] h-[21px] mr-[2px]" />
          </div>
        </div>
        <div className="w-[5px] bg-[#ececec]" />
        {/* vertical scroll */}
        <div className="w-[20px] flex flex-col">
          <div className="h-[23px] bg-[#808080]" />
          <div className="h-[7px] bg-[#e8e8e8]" />
          <ArrowBtn dir="up" className="w-[20px] h-[16px]" />
          <div className="h-[489px] bg-[#f0f0f0] border-r-2 border-b-2 border-[#a8a8a8]">
            <div className="h-[160px] bg-white" />
          </div>
          <div className="h-[205px] bg-[#c0c0c0]" />
          <ArrowBtn dir="down" className="w-[20px] h-[18px]" />
          <div className="h-[50px] bg-[#808080]" />
          <div className="h-[4px] bg-[#e0e0e0]" />
          <div className="h-[21px] bg-[#808080]" />
        </div>
      </div>

      {/* status bar */}
      <div className="absolute left-0 right-0 top-[1002px] h-[28px] bg-[#efefef] border-t-2 border-[#b8b8b8] flex items-center pl-[2px] text-[#222]">
        <div className="w-[212px] h-[24px] flex items-center pl-[9px] border-r-2 border-[#b0b0b0]">70 ns to 363 ns</div>
        <div className="pl-[8px]">/ASFIFO_tb/rd_empty</div>
      </div>
      <div className="absolute left-[1667px] top-[1004px] text-[15.8px] text-white/80 whitespace-nowrap">https://blog.csdn.net/qq_40807206</div>
      <svg viewBox="0 0 14 14" className="absolute right-[2px] bottom-[2px] w-[14px] h-[14px]"><path d="M13 3L3 13M13 7l-6 6M13 11l-2 2" stroke="#999" /></svg>

      {/* overview marker on the right edge */}
      <div className="absolute left-[1910px] top-[872px] w-[10px] h-[60px] border-2 border-r-0 border-[#707070] rounded-l-md">
        <div className="absolute left-[2px] top-[44px] w-[4px] h-[14px] bg-[#20b070]" />
      </div>
    </div>
  );
}
